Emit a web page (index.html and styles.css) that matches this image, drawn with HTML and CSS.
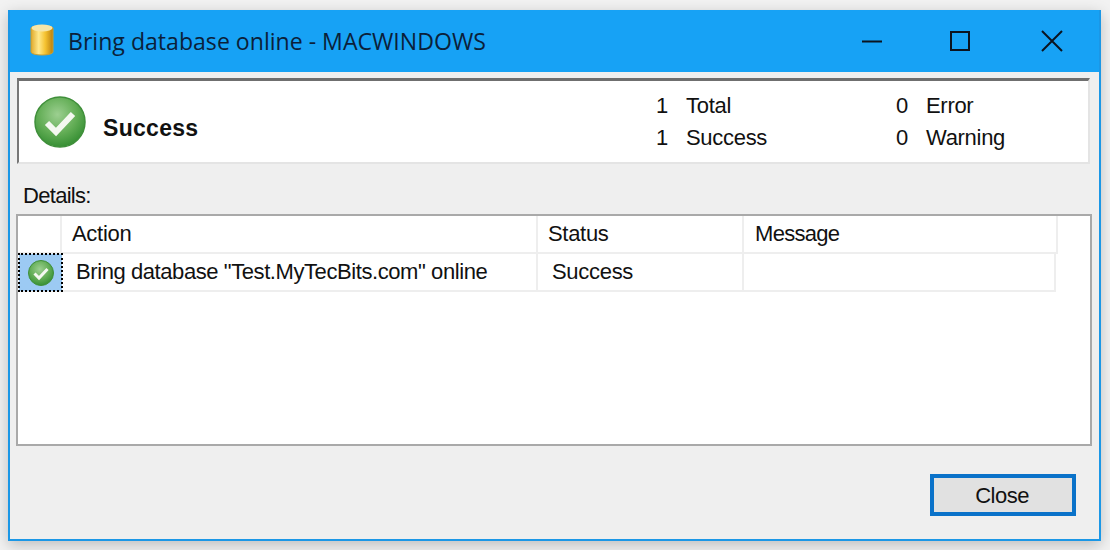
FILE: index.html
```html
<!DOCTYPE html>
<html lang="en">
<head>
<meta charset="utf-8">
<title>Bring database online - MACWINDOWS</title>
<link rel="stylesheet" href="styles.css">
</head>
<body>
<svg class="defs" width="0" height="0" aria-hidden="true">
  <defs>
    <radialGradient id="ball" cx="45%" cy="35%" r="70%">
      <stop offset="0" stop-color="#9ccf90"/>
      <stop offset="0.55" stop-color="#62ad55"/>
      <stop offset="1" stop-color="#2f8a2e"/>
    </radialGradient>
    <linearGradient id="can" x1="0" x2="1" y1="0" y2="0">
      <stop offset="0" stop-color="#e0a92a"/>
      <stop offset="0.35" stop-color="#ffe98c"/>
      <stop offset="0.65" stop-color="#f5c230"/>
      <stop offset="1" stop-color="#b97f10"/>
    </linearGradient>
  </defs>
</svg>
<div class="window">
  <header class="titlebar">
    <svg class="db-icon" width="24" height="34" viewBox="0 0 24 34">
      <path d="M1 5C1 2 23 2 23 5V29C23 33 1 33 1 29Z" fill="url(#can)" stroke="#c9a035" stroke-width="1"/>
      <ellipse cx="12" cy="5" rx="10.5" ry="3.4" fill="#f6e6a8"/>
    </svg>
    <span class="title">Bring database online - MACWINDOWS</span>
    <div class="controls">
      <svg class="ctl ctl-min" width="20" height="20" viewBox="0 0 20 20"><path d="M0 10.5H20" stroke="#0b1420" stroke-width="2"/></svg>
      <svg class="ctl ctl-max" width="20" height="20" viewBox="0 0 20 20"><rect x="1" y="1" width="18" height="18" fill="none" stroke="#0b1420" stroke-width="2"/></svg>
      <svg class="ctl ctl-close" width="22" height="22" viewBox="0 0 22 22"><path d="M1 1L21 21M21 1L1 21" stroke="#0b1420" stroke-width="2"/></svg>
    </div>
  </header>
  <main class="content">
    <section class="summary">
      <svg class="big-check" width="52" height="52" viewBox="0 0 52 52">
        <circle cx="26" cy="26" r="25" fill="url(#ball)" stroke="#3f8f3a" stroke-width="1.5"/>
        <path d="M13 27L22 36L39 18" fill="none" stroke="#f4f8f0" stroke-width="6"/>
      </svg>
      <strong class="summary-label">Success</strong>
      <div class="counts">
        <span class="num">1</span><span>Total</span>
        <span class="num">0</span><span>Error</span>
        <span class="num">1</span><span>Success</span>
        <span class="num">0</span><span>Warning</span>
      </div>
    </section>
    <div class="details-label">Details:</div>
    <section class="list">
      <div class="row head">
        <div class="cell cell-icon"></div>
        <div class="cell cell-action">Action</div>
        <div class="cell cell-status">Status</div>
        <div class="cell cell-message">Message</div>
      </div>
      <div class="row item">
        <div class="cell cell-icon selected">
          <svg width="26" height="26" viewBox="0 0 52 52">
            <circle cx="26" cy="26" r="25" fill="url(#ball)" stroke="#3f8f3a" stroke-width="2"/>
            <path d="M13 27L22 36L39 18" fill="none" stroke="#f4f8f0" stroke-width="6"/>
          </svg>
        </div>
        <div class="cell cell-action">Bring database "Test.MyTecBits.com" online</div>
        <div class="cell cell-status">Success</div>
        <div class="cell cell-message"></div>
      </div>
    </section>
    <footer class="footer">
      <button class="close-btn" type="button">Close</button>
    </footer>
  </main>
</div>
</body>
</html>
```
FILE: styles.css
```css
* { box-sizing: border-box; }
html, body { margin: 0; height: 100%; }
body {
  width: 1110px;
  height: 550px;
  overflow: hidden;
  background: #f2f2f2;
  padding: 10px 9px 9px 8px;
  font-family: "Liberation Sans", Arial, sans-serif;
  font-size: 22px;
  color: #111;
}
.defs { position: absolute; }
.window {
  height: 531px;
  display: flex;
  flex-direction: column;
  background: #efefef;
  border: 2px solid #1b97e6;
  border-top: 0;
  box-shadow: 0 4px 14px rgba(0, 0, 0, 0.22);
}
.titlebar {
  height: 62px;
  flex: none;
  display: flex;
  align-items: center;
  background: #17a2f5;
  padding-left: 20px;
}
.db-icon { flex: none; margin-top: -2px; }
.title {
  margin-left: 14px;
  font-family: "Open Sans", sans-serif;
  font-size: 23.1px;
  color: #0b1f3a;
  white-space: nowrap;
}
.controls {
  margin-left: auto;
  display: flex;
  align-items: center;
  margin-right: 36px;
}
.ctl-min { margin-right: 68px; }
.ctl-max { margin-right: 71px; }
.content {
  flex: 1;
  display: flex;
  flex-direction: column;
  padding: 6px 7px 0 6px;
  min-height: 0;
}
.summary {
  height: 86px;
  flex: none;
  margin-left: 1px;
  margin-right: 2px;
  background: #fff;
  border-style: solid;
  border-width: 3px 2px 2px 2px;
  border-color: #6f6f6f #e4e4e4 #e4e4e4 #777;
  display: flex;
  align-items: center;
  padding-left: 15px;
}
.big-check { flex: none; margin-top: 1px; }
.summary-label {
  margin-left: 17px;
  margin-top: 13px;
  font-size: 23px;
  letter-spacing: 0.3px;
  color: #111;
}
.counts {
  margin-left: auto;
  margin-right: 82px;
  margin-top: 1px;
  display: grid;
  grid-template-columns: 10px 190px 10px 80px;
  grid-auto-rows: 32px;
  align-items: center;
  column-gap: 20px;
  letter-spacing: -0.3px;
}
.num { text-align: right; }
.details-label {
  margin-top: 18px;
  margin-left: 7px;
  height: 32px;
  line-height: 28px;
  flex: none;
  letter-spacing: -0.7px;
}
.list {
  height: 232px;
  flex: none;
  background: #fff;
  border: 2px solid #a9a9a9;
  padding-right: 32px;
}
.row { display: grid; grid-template-columns: 44px 476px 206px 1fr; }
.head { height: 38px; border-bottom: 2px solid #eee; }
.item { height: 38px; margin-right: 2px; border-bottom: 2px solid #eee; }
.cell {
  display: flex;
  align-items: center;
  border-right: 2px solid #eee;
  white-space: nowrap;
  letter-spacing: -0.3px;
}
.head .cell { padding-left: 10px; }
.head .cell-message { padding-left: 11px; letter-spacing: -0.7px; }
.item .cell-action { padding-left: 14px; letter-spacing: -0.42px; }
.item .cell-status { padding-left: 14px; }
.selected {
  justify-content: center;
  background: #9ccaf3;
  outline: 2px dotted #000;
  outline-offset: -1px;
  margin: 0 0 -1px 1px;
  border-right: 0;
}
.footer {
  flex: 1;
  display: flex;
  justify-content: flex-end;
  align-items: flex-start;
  padding-top: 28px;
  padding-right: 16px;
}
.close-btn {
  width: 146px;
  height: 42px;
  background: #e1e1e1;
  border: 4px solid #0a72c9;
  font: inherit;
  letter-spacing: -0.5px;
  color: #111;
  padding: 2px 2px 0 0;
}
```
